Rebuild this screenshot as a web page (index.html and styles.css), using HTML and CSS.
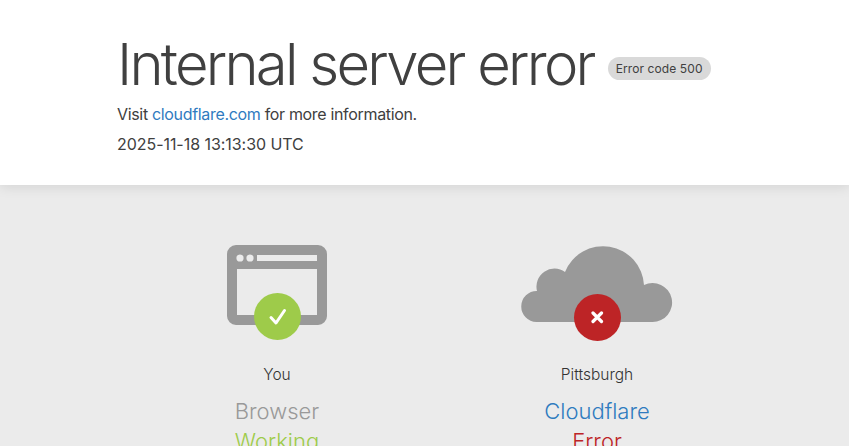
FILE: index.html
```html
<!DOCTYPE html>
<html lang="en">
<head>
    <meta charset="UTF-8">
    <meta name="viewport" content="width=device-width, initial-scale=1.0">
    <title>Internal server error</title>
    <link rel="stylesheet" href="styles.css">
</head>
<body>

    <!-- Error heading -->
    <header class="error-header">
        <div class="error-title-row">
            <h1>Internal server error</h1>
            <span class="error-code">Error code 500</span>
        </div>
        <p class="error-info">Visit <a href="#">cloudflare.com</a> for more information.</p>
        <p class="error-time">2025-11-18 13:13:30 UTC</p>
    </header>

    <!-- Status columns -->
    <section class="status-section">
        <div class="status-col">
            <div class="status-icon">
                <svg class="browser-icon" width="100" height="80" viewBox="0 0 100 80">
                    <path fill="#999" fill-rule="evenodd" d="M9 0H91A9 9 0 0 1 100 9V71A9 9 0 0 1 91 80H9A9 9 0 0 1 0 71V9A9 9 0 0 1 9 0ZM10 24V70H90V24ZM30 10V16H90V10Z"/>
                    <circle cx="13" cy="13" r="3.6" fill="#ebebeb"/>
                    <circle cx="23" cy="13" r="3.6" fill="#ebebeb"/>
                </svg>
                <span class="status-badge badge-ok">
                    <svg width="20" height="20" viewBox="0 0 20 20">
                        <path d="M3 10.5L8 16L16.500 3.500" fill="none" stroke="#fff" stroke-width="3" stroke-linecap="round" stroke-linejoin="round"/>
                    </svg>
                </span>
            </div>
            <div class="status-place">You</div>
            <div class="status-name">Browser</div>
            <div class="status-state state-ok">Working</div>
        </div>
        <div class="status-col">
            <div class="status-icon">
                <svg class="cloud-icon" width="152" height="78" viewBox="0 0 152 78">
                    <path fill="#999" d="M15.500 77A15.500 15.500 0 0 1 16 46A18 18 0 0 1 44 27A41 41 0 0 1 123 40A19.500 19.500 0 1 1 131.500 77Z"/>
                </svg>
                <span class="status-badge badge-error">
                    <svg width="13" height="13" viewBox="0 0 13 13">
                        <path d="M2 2L10.500 10.500M10.500 2L2 10.500" fill="none" stroke="#fff" stroke-width="3.200" stroke-linecap="round"/>
                    </svg>
                </span>
            </div>
            <div class="status-place">Pittsburgh</div>
            <div class="status-name"><a href="#">Cloudflare</a></div>
            <div class="status-state state-error">Error</div>
        </div>
    </section>

</body>
</html>
```

FILE: styles.css
```css
html, body {
    height: 100%;
    overflow: hidden;
}

body {
    font-family: Inter, "Liberation Sans", sans-serif;
    background-color: #ebebeb;
    color: #404040;
    margin: 0;
    padding: 0;
}

a {
    color: #2f7bbf;
    text-decoration: none;
}

/* Header */
.error-header {
    position: relative;
    box-sizing: border-box;
    height: 185px;
    padding: 31px 0 0 117px;
    background-color: #fff;
    box-shadow: 0 2px 12px rgba(0, 0, 0, 0.1);
}

.error-title-row {
    display: flex;
    align-items: center;
    height: 66px;
}

h1 {
    margin: 0;
    font-size: 58px;
    line-height: 66px;
    font-weight: 300;
    letter-spacing: -2.75px;
    white-space: nowrap;
}

.error-code {
    margin: 8px 0 0 14px;
    padding: 0 8px;
    height: 23px;
    line-height: 23px;
    border-radius: 12px;
    background-color: #d9d9d9;
    font-size: 12px;
    letter-spacing: 0.1px;
    white-space: nowrap;
}

.error-info, .error-time {
    margin: 0;
    font-size: 16px;
    line-height: 24px;
}

.error-info {
    margin-top: 5px;
    letter-spacing: -0.33px;
}

.error-time {
    margin-top: 6px;
    letter-spacing: -0.05px;
}

/* Status columns */
.status-section {
    display: grid;
    grid-template-columns: 320px 320px;
    padding: 60px 0 0 117px;
}

.status-col {
    display: flex;
    flex-direction: column;
    align-items: center;
}

.status-icon {
    position: relative;
    display: flex;
    align-items: flex-start;
    justify-content: center;
    height: 119px;
}

.status-badge {
    position: absolute;
    left: 50%;
    top: 48px;
    display: flex;
    align-items: center;
    justify-content: center;
    width: 47px;
    height: 47px;
    margin-left: -23px;
    border-radius: 50%;
}

.badge-ok {
    background-color: #9ecb4a;
}

.badge-error {
    top: 49px;
    background-color: #bd2426;
}

.status-place {
    font-size: 15.500px;
    line-height: 22px;
    font-weight: 300;
    color: #333;
}

.status-name, .status-state {
    font-size: 22px;
    line-height: 30px;
    font-weight: 300;
}

.status-name {
    margin-top: 10px;
    color: #999;
}

.state-ok {
    color: #9ecb4a;
}

.state-error {
    color: #bd2426;
}
```
